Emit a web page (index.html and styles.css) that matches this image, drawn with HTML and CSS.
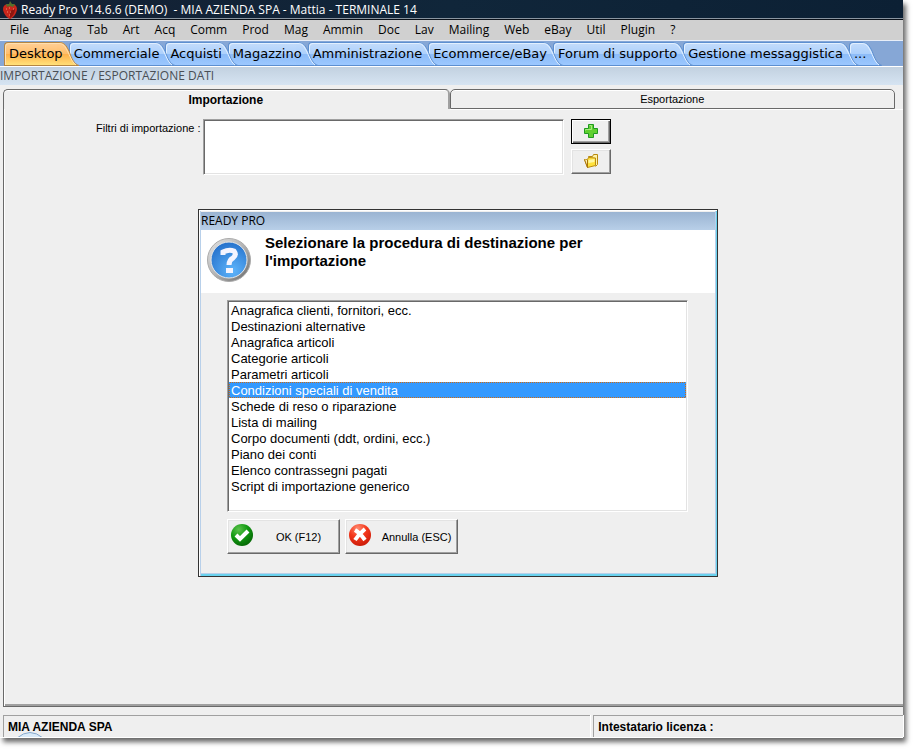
FILE: index.html
```html
<!DOCTYPE html>
<html lang="it">
<head>
<meta charset="utf-8">
<meta name="viewport" content="width=device-width, initial-scale=1">
<title>Ready Pro</title>
<link rel="stylesheet" href="styles.css">
</head>
<body>
<svg class="defs" aria-hidden="true">
  <defs>
    <linearGradient id="blue" x1="0" y1="0" x2="0" y2="1">
      <stop offset="0" stop-color="#c4dcfb"/><stop offset=".5" stop-color="#acd0fc"/>
      <stop offset=".52" stop-color="#8dbcf8"/><stop offset="1" stop-color="#9cc8ff"/>
    </linearGradient>
    <linearGradient id="orange" x1="0" y1="0" x2="0" y2="1">
      <stop offset="0" stop-color="#ffcf96"/><stop offset=".5" stop-color="#ffbe6a"/>
      <stop offset=".52" stop-color="#ffb24c"/><stop offset="1" stop-color="#ffe27a"/>
    </linearGradient>
    <radialGradient id="ball" cx=".6" cy=".8" r=".8">
      <stop offset="0" stop-color="#5eb4fb"/><stop offset="1" stop-color="#2672cc"/>
    </radialGradient>
    <linearGradient id="rim" x1="0" y1="0" x2="1" y2="1">
      <stop offset="0" stop-color="#e6e6e6"/><stop offset=".5" stop-color="#b4b4b4"/><stop offset="1" stop-color="#666"/>
    </linearGradient>
    <radialGradient id="green" cx=".35" cy=".25" r=".8">
      <stop offset="0" stop-color="#5cc24c"/><stop offset=".5" stop-color="#129a12"/><stop offset="1" stop-color="#056605"/>
    </radialGradient>
    <radialGradient id="red" cx=".4" cy=".2" r=".8">
      <stop offset="0" stop-color="#ff8a70"/><stop offset=".5" stop-color="#f4381c"/><stop offset="1" stop-color="#cc1c08"/>
    </radialGradient>
    <symbol id="slope-blue" viewBox="0 0 22 24">
      <path d="M0 0H2C7 0 9 3 12 9C15 17 17 22 22 24H0Z" fill="url(#blue)"/>
      <path d="M0 23.500H21" stroke="#5d8fd0"/>
      <path d="M0 .5H2C7 .5 9 3 12 9C15 17 17 22 22 23.500" fill="none" stroke="#5d8fd0"/>
      <path d="M0 1.500H2C6 1.500 8 4 11 10C14 17 16 21 19 23" fill="none" stroke="#e2f0ff"/>
    </symbol>
    <symbol id="slope-orange" viewBox="0 0 22 24">
      <path d="M0 0H2C7 0 9 3 12 9C15 17 17 22 22 24H0Z" fill="url(#orange)"/>
      <path d="M0 23.500H21" stroke="#b58642"/>
      <path d="M0 .5H2C7 .5 9 3 12 9C15 17 17 22 22 23.500" fill="none" stroke="#b58642"/>
      <path d="M0 1.500H2C6 1.500 8 4 11 10C14 17 16 21 19 23" fill="none" stroke="#ffe0b0"/>
    </symbol>
  </defs>
</svg>

<div class="window">
  <header class="titlebar">
    <svg class="berry" viewBox="0 0 16 18" aria-hidden="true">
      <path d="M8 4C11 2 15 4 15 8C15 12 11 17 8 18C5 17 1 12 1 8C1 4 5 2 8 4Z" fill="#c8261c"/>
      <path d="M8 10L13 8C13 12 10 16 8 17Z" fill="#8e1610"/>
      <path d="M4 3L7 3L8 0L10 3L13 3L11 6L8 5L5 6Z" fill="#55702c"/>
      <path d="M4 8h1M7 7h1M11 8h1M5 11h1M8 11h1M7 14h1" stroke="#f08a6c"/>
    </svg>
    <h1>Ready Pro V14.6.6 (DEMO) &nbsp;- MIA AZIENDA SPA - Mattia - TERMINALE 14</h1>
  </header>

  <nav class="menu" aria-label="Menu">
    <a href="#">File</a><a href="#">Anag</a><a href="#">Tab</a><a href="#">Art</a><a href="#">Acq</a><a href="#">Comm</a><a href="#">Prod</a><a href="#">Mag</a><a href="#">Ammin</a><a href="#">Doc</a><a href="#">Lav</a><a href="#">Mailing</a><a href="#">Web</a><a href="#">eBay</a><a href="#">Util</a><a href="#">Plugin</a><a href="#">?</a>
  </nav>

  <nav class="ribbon" aria-label="Aree">
    <a class="active" href="#"><svg aria-hidden="true"><use href="#slope-orange"/></svg><span>Desktop</span></a>
    <a href="#"><svg aria-hidden="true"><use href="#slope-blue"/></svg><span>Commerciale</span></a>
    <a href="#"><svg aria-hidden="true"><use href="#slope-blue"/></svg><span>Acquisti</span></a>
    <a href="#"><svg aria-hidden="true"><use href="#slope-blue"/></svg><span>Magazzino</span></a>
    <a href="#"><svg aria-hidden="true"><use href="#slope-blue"/></svg><span>Amministrazione</span></a>
    <a href="#"><svg aria-hidden="true"><use href="#slope-blue"/></svg><span>Ecommerce/eBay</span></a>
    <a href="#"><svg aria-hidden="true"><use href="#slope-blue"/></svg><span>Forum di supporto</span></a>
    <a href="#"><svg aria-hidden="true"><use href="#slope-blue"/></svg><span>Gestione messaggistica</span></a>
    <a href="#"><svg aria-hidden="true"><use href="#slope-blue"/></svg><span>...</span></a>
  </nav>

  <h2 class="caption">IMPORTAZIONE / ESPORTAZIONE DATI</h2>

  <main class="panel">
    <div class="tabs">
      <button class="tab current" type="button">Importazione</button>
      <button class="tab" type="button">Esportazione</button>
    </div>
    <div class="page">
      <label for="filters">Filtri di importazione :</label>
      <select id="filters" class="sunken filters" size="3"></select>
      <div class="tools">
        <button class="raised default" type="button" aria-label="Aggiungi">
          <svg viewBox="0 0 14 14" aria-hidden="true"><path d="M4.500 .5h5v4h4v5h-4v4h-5v-4h-4v-5h4z" fill="#5fd030" stroke="#1f9a20"/><path d="M5.500 1.500h2v4h-6v1" fill="none" stroke="#a8ec80"/></svg>
        </button>
        <button class="raised" type="button" aria-label="Apri">
          <svg viewBox="0 0 14 14" aria-hidden="true"><path d="M4.500 3.500V2.500H8.500L9.500 .5H13.500V10.500L11.500 12.500" fill="#fff3a8" stroke="#b98a10"/><path d="M.5 5.500H3.500L4.500 3.500L11.500 4V11.500L3.500 13.500Z" fill="#ffe23c" stroke="#b98a10"/><path d="M4.500 6L10.500 5V8L4.500 9Z" fill="#fff8a8"/><path d="M.5 5.500L3.500 13.500V6" stroke="#a87408" fill="#fff0b0"/></svg>
        </button>
      </div>
    </div>
  </main>

  <footer class="status">
    <div class="cell">MIA AZIENDA SPA<svg class="ring" viewBox="0 0 28 5" aria-hidden="true"><path d="M1 6Q14 -5 27 6" fill="#d9eaf8" stroke="#86a9cc"/></svg></div>
    <div class="cell">Intestatario licenza :</div>
  </footer>

  <section class="dialog" role="dialog" aria-labelledby="dialog-title">
    <h2 id="dialog-title" class="dialog-title">READY PRO</h2>
    <div class="banner">
      <svg viewBox="0 0 44 44" aria-hidden="true">
        <circle cx="22" cy="22" r="21.500" fill="url(#rim)" stroke="#aaa"/>
        <circle cx="22" cy="22" r="18" fill="url(#ball)" stroke="#e8e8e8"/>
        <path d="M16 17V14Q22 11 27 13Q30 17 26 20Q22 22 22 27" fill="none" stroke="#f4f4ff" stroke-width="5"/>
        <path d="M19 30h7v5h-7z" fill="#f4f4ff"/>
      </svg>
      <p>Selezionare la procedura di destinazione per l'importazione</p>
    </div>
    <div class="choices">
      <select class="sunken list" size="13" aria-label="Procedura di destinazione" autofocus>
        <option>Anagrafica clienti, fornitori, ecc.</option>
        <option>Destinazioni alternative</option>
        <option>Anagrafica articoli</option>
        <option>Categorie articoli</option>
        <option>Parametri articoli</option>
        <option selected>Condizioni speciali di vendita</option>
        <option>Schede di reso o riparazione</option>
        <option>Lista di mailing</option>
        <option>Corpo documenti (ddt, ordini, ecc.)</option>
        <option>Piano dei conti</option>
        <option>Elenco contrassegni pagati</option>
        <option>Script di importazione generico</option>
      </select>
      <div class="actions">
        <button class="raised" type="button">
          <svg viewBox="0 0 22 22" aria-hidden="true"><circle cx="11" cy="11" r="11" fill="url(#green)"/><path d="M5 11L9 15L17 7" fill="none" stroke="#fff" stroke-width="4"/></svg>
          <span>OK (F12)</span>
        </button>
        <button class="raised" type="button">
          <svg viewBox="0 0 22 22" aria-hidden="true"><circle cx="11" cy="11" r="11" fill="url(#red)"/><path d="M6 6Q11 9 16 16M16 5Q10 10 6 16" fill="none" stroke="#fff" stroke-width="4"/></svg>
          <span>Annulla (ESC)</span>
        </button>
      </div>
    </div>
  </section>
</div>
</body>
</html>
```
FILE: styles.css
```css
* { box-sizing: border-box; }

body {
  margin: 0;
  min-height: 100vh;
  padding: 0 15px 15px 0;
  display: flex;
  background: #fff;
  color: #000;
  font: 11px/14px "Liberation Sans", Arial, sans-serif;
}

h1, h2, p { margin: 0; font-weight: normal; }
a { color: inherit; text-decoration: none; }
button, select { font: inherit; color: inherit; margin: 0; border-radius: 0; }
.defs { position: absolute; width: 0; height: 0; }

.window {
  position: relative;
  flex: 1;
  display: flex;
  flex-direction: column;
  background: #efefef;
  box-shadow: 3px 4px 5px #666;
}

.titlebar {
  display: flex;
  align-items: center;
  height: 20px;
  padding: 0 2px;
  gap: 3px;
  background: linear-gradient(90deg, #142033, #10263a 50%, #0c2034);
  border-bottom: 1px solid #0a1018;
  box-shadow: inset 0 -1px #8a95a0;
  color: #fff;
}
.titlebar h1 { font: 12px/18px "Open Sans", sans-serif; }
.berry { width: 16px; height: 18px; }

.menu {
  display: flex;
  gap: 15px;
  height: 20px;
  padding: 0 10px;
  background: #d0d0d0;
  font: 12px/20px "Open Sans", sans-serif;
}

.ribbon {
  display: flex;
  height: 27px;
  padding: 1px 4px 0;
  background: #86a7d6;
  border-top: 1px solid #e8eef8;
  border-bottom: 1px solid #fff;
  font: 13px/23px "DejaVu Sans", Verdana, sans-serif;
}
.ribbon a {
  position: relative;
  height: 24px;
  padding: 0 16px 0 5px;
  margin-right: -10px;
}
.ribbon a::before {
  content: "";
  position: absolute;
  inset: 0 22px 0 0;
  background: linear-gradient(#c4dcfb, #acd0fc 50%, #8dbcf8 52%, #9cc8ff);
  border: solid #5d8fd0;
  border-width: 1px 0 1px 1px;
  border-top-left-radius: 4px;
  box-shadow: inset 1px 1px #e2f0ff;
}
.ribbon .active::before {
  background: linear-gradient(#ffcf96, #ffbe6a 50%, #ffb24c 52%, #ffe27a);
  border-color: #b58642;
  box-shadow: inset 1px 1px #ffe0b0;
}
.ribbon svg { position: absolute; top: 0; right: 0; width: 22px; height: 24px; }
.ribbon span { position: relative; }
.ribbon a:nth-child(1) { z-index: 9; }
.ribbon a:nth-child(2) { z-index: 8; }
.ribbon a:nth-child(3) { z-index: 7; }
.ribbon a:nth-child(4) { z-index: 6; }
.ribbon a:nth-child(5) { z-index: 5; }
.ribbon a:nth-child(6) { z-index: 4; }
.ribbon a:nth-child(7) { z-index: 3; }
.ribbon a:nth-child(8) { z-index: 2; }
.ribbon a:nth-child(9) { z-index: 1; }

.caption {
  height: 18px;
  background: linear-gradient(#c2d1e0, #d6e4f2);
  color: #4a4f55;
  font: 12px/18px "Open Sans", sans-serif;
}

.panel {
  flex: 1;
  display: flex;
  flex-direction: column;
  margin: 4px 0 8px 3px;
}
.tabs { display: flex; padding-right: 8px; }
.tab {
  flex: 1;
  height: 20px;
  padding: 0;
  background: #efefef;
  border: 1px solid #696969;
  border-radius: 5px 5px 0 0;
  box-shadow: inset 0 1px #fff;
}
.tab.current {
  border-bottom: 0;
  border-right: 2px solid #a0a0a0;
  font: bold 12px/14px "Liberation Sans", Arial, sans-serif;
}
.page {
  flex: 1;
  display: flex;
  align-items: flex-start;
  padding: 10px 0 0 92px;
  border-left: 1px solid #696969;
  border-bottom: 1px solid #696969;
  box-shadow: inset 1px 0 #fff, inset 0 -2px #a0a0a0;
  background: linear-gradient(#fff, #fff) 446px 0 / 100% 1px no-repeat;
}
.page label { width: 107px; padding-top: 2px; }

.sunken {
  appearance: none;
  padding: 0;
  background: #fff;
  border: 1px solid;
  border-color: #a0a0a0 #fff #fff #a0a0a0;
  box-shadow: inset 1px 1px #696969, inset -1px -1px #e3e3e3;
  outline: 0;
  overflow: hidden;
}
.filters { width: 361px; height: 56px; }

.raised {
  background: #efefef;
  border: 1px solid;
  border-color: #fff #696969 #696969 #fff;
  box-shadow: inset -1px -1px #a0a0a0, inset 1px 1px #e3e3e3;
}
.tools { display: grid; gap: 5px; margin-left: 7px; }
.tools button {
  display: flex;
  align-items: center;
  justify-content: center;
  width: 40px;
  height: 25px;
  padding: 0 0 2px;
}
.tools svg { width: 14px; height: 14px; }
.raised.default {
  border-color: #000;
  box-shadow: inset 1px 1px #fff, inset -1px -1px #696969, inset -2px -2px #a0a0a0;
}

.status { display: flex; gap: 3px; padding-left: 3px; border-bottom: 1px solid #fff; }
.cell {
  position: relative;
  flex: 594;
  height: 22px;
  padding: 0 4px;
  border: solid #a0a0a0;
  border-width: 1px 0 0 1px;
  box-shadow: 1px 0 #fff;
  font: bold 12px/22px "Liberation Sans", Arial, sans-serif;
}
.cell + .cell { flex: 309; }
.ring { position: absolute; left: 12px; bottom: 0; width: 28px; height: 5px; }

.dialog {
  position: absolute;
  left: 198px;
  top: 209px;
  width: 520px;
  height: 368px;
  background: #efefef;
  border: 1px solid #333;
  box-shadow: inset 1px 1px #fff, inset 2px 0 #b8d0ea, inset -1px -2px #6ad2ee, inset -2px -3px #b8d0ea;
  padding: 2px;
}
.dialog-title {
  height: 18px;
  background: linear-gradient(#9ab4d2, #b8cfe8);
  font: 12px/18px "Open Sans", sans-serif;
}
.banner {
  display: flex;
  gap: 14px;
  height: 63px;
  padding: 4px 6px;
  background: #fff;
}
.banner svg { flex: none; width: 44px; height: 44px; margin-top: 4px; }
.banner p {
  max-width: 360px;
  font: bold 15px/18px "Liberation Sans", Arial, sans-serif;
}
.choices { padding: 7px 27px 0 26px; }
.list {
  display: block;
  width: 100%;
  height: 212px;
  padding: 1px;
  font: 13px/16px "Liberation Sans", Arial, sans-serif;
}
.list option {
  min-height: 16px;
  height: 16px;
  padding: 1px 2px 0;
  line-height: 15px;
}
/* Dotted focus frame drawn as four one-pixel strips over the highlight. */
.list option:checked {
  background:
    repeating-linear-gradient(90deg, #39f 0 1px, #d06a10 1px 2px) 0 0 / 100% 1px no-repeat,
    repeating-linear-gradient(90deg, #39f 0 1px, #d06a10 1px 2px) 0 100% / 100% 1px no-repeat,
    repeating-linear-gradient(#d06a10 0 1px, #39f 1px 2px) 0 0 / 1px 100% no-repeat,
    repeating-linear-gradient(#d06a10 0 1px, #39f 1px 2px) 100% 0 / 1px 100% no-repeat,
    linear-gradient(#39f, #39f);
  color: #fff;
}
.actions { display: flex; gap: 5px; margin-top: 7px; }
.actions button {
  display: flex;
  align-items: center;
  width: 113px;
  height: 35px;
  padding: 0 3px;
}
.actions svg { flex: none; width: 22px; height: 22px; margin-bottom: 3px; }
.actions span { flex: 1; padding-left: 8px; text-align: center; }
```
